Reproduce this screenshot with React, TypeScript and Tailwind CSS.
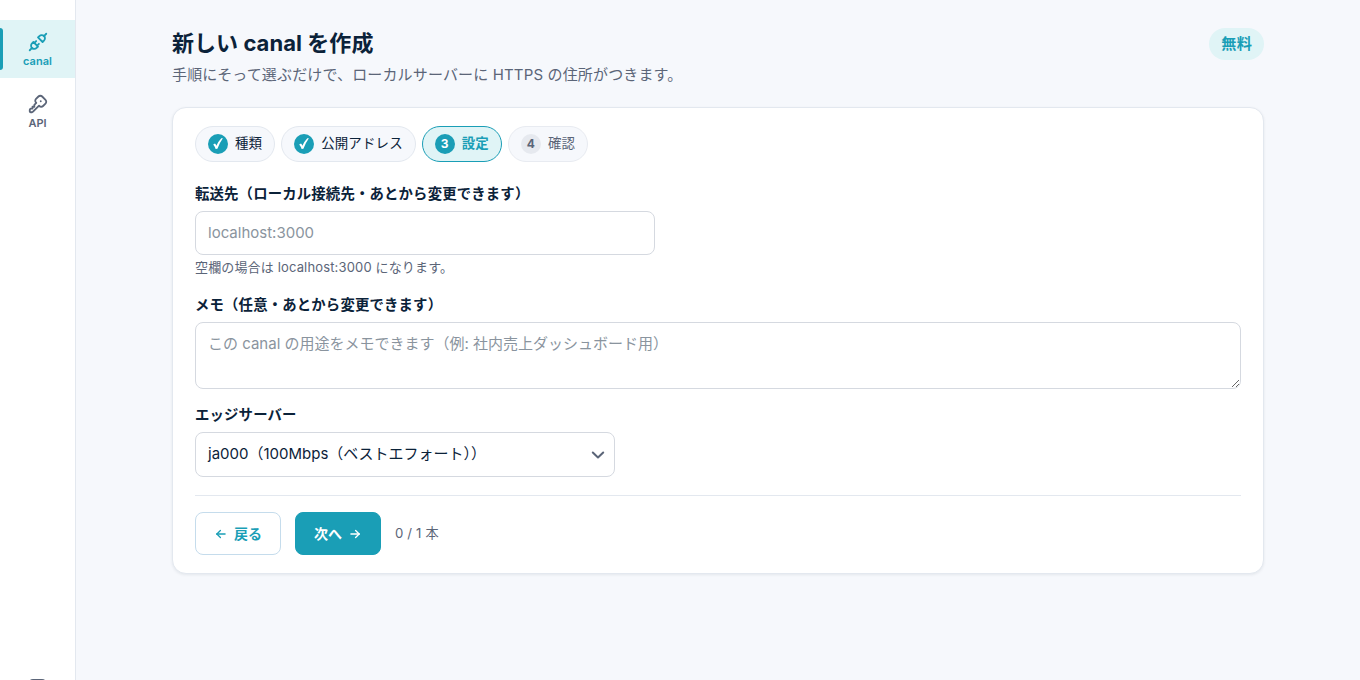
import type { ReactNode } from 'react';
import clsx from 'clsx';
import {
  TbArrowLeft,
  TbArrowRight,
  TbKey,
  TbPlugConnected
} from 'react-icons/tb';

type NavItemProps = {
  icon: ReactNode;
  label: string;
  active?: boolean;
};

function NavItem({ icon, label, active }: NavItemProps) {
  return (
    <a
      className={clsx(
        'relative flex h-[58px] flex-col items-center pt-[11px] text-[11px] font-semibold leading-[17px]',
        active ? 'bg-[#e0f4f6] text-[#1a9eb6]' : 'text-[#5b6578]'
      )}
    >
      {active && (
        <span className="absolute left-0 top-2 h-[42px] w-[3px] rounded-r-[3px] bg-[#1a9eb6]" />
      )}
      {icon}
      <span>{label}</span>
    </a>
  );
}

function CheckMark() {
  return (
    <svg className="size-5" viewBox="0 0 20 20" fill="currentColor">
      <path d="M5.2 10.6 7 9.6q.9.8 1.4 2.2Q10.300 7.300 13.300 4.200l1.600 0Q11.600 8.700 9.400 14.700l-1.800.3Q6.700 12.400 5.200 10.600Z" />
    </svg>
  );
}

type StepProps = {
  number: number;
  label: string;
  state: 'done' | 'current' | 'todo';
};

function Step({ number, label, state }: StepProps) {
  return (
    <li
      className={clsx(
        'flex h-9 items-center gap-[7px] rounded-full border px-3 text-[13.44px] leading-[22px]',
        state === 'done' && 'border-[#e3e8ef] bg-[#f6f8fc] text-[#0b2239]',
        state === 'current' &&
          'border-[#1a9eb6] bg-[#e0f4f6] font-bold text-[#1a9eb6]',
        state === 'todo' && 'border-[#e8ebf1] bg-[#f6f8fc] text-[#5b6578]'
      )}
    >
      <span
        className={clsx(
          'flex size-5 items-center justify-center rounded-full text-[12px] font-bold leading-none',
          state === 'todo'
            ? 'bg-[#e6e9ef] text-[#5b6578]'
            : 'bg-[#1a9eb6] text-white'
        )}
      >
        {state === 'done' ? <CheckMark /> : number}
      </span>
      <span className="-mt-0.5">{label}</span>
    </li>
  );
}

const steps: StepProps[] = [
  { number: 1, label: '種類', state: 'done' },
  { number: 2, label: '公開アドレス', state: 'done' },
  { number: 3, label: '設定', state: 'current' },
  { number: 4, label: '確認', state: 'todo' }
];

export default function App() {
  return (
    <div
      lang="ja"
      className="flex h-screen overflow-hidden bg-[#f6f8fc] font-['Inter','Noto_Sans_CJK_JP',sans-serif] text-[15px] tracking-[0.15px] text-[#0b2239]"
    >
      <aside className="flex w-[76px] shrink-0 flex-col border-r border-[#e3e8ef] bg-white pt-5 tracking-normal">
        <NavItem icon={<TbPlugConnected size={22} />} label="canal" active />
        <div className="mt-1">
          <NavItem icon={<TbKey size={22} />} label="API" />
        </div>
        <div className="mt-auto flex h-1 shrink-0 justify-center pt-[3px]">
          <span className="h-3 w-[17px] shrink-0 rounded-sm border-2 border-[#5b6578]" />
        </div>
      </aside>

      <main className="flex-1 px-24 pt-7">
        <header className="flex items-start justify-between">
          <div>
            <h1 className="text-[22px] font-bold leading-[30px] tracking-[0.05px]">
              新しい canal を作成
            </h1>
            <p className="mt-[5px] leading-6 text-[#5b6578]">
              手順にそって選ぶだけで、ローカルサーバーに HTTPS の住所がつきます。
            </p>
          </div>
          <span className="flex h-8 items-center rounded-full bg-[#e0f4f6] px-3 text-[15.2px] font-bold text-[#1a9eb6]">
            無料
          </span>
        </header>

        <section className="mt-5 rounded-[14px] border border-[#e3e8ef] bg-white px-[22px] py-[18px] shadow-[0_1px_3px_rgba(11,34,57,0.08)]">
          <ol className="flex gap-1.5">
            {steps.map((step) => (
              <Step key={step.number} {...step} />
            ))}
          </ol>

          <div className="mt-5">
            <label className="block text-[14.4px] font-bold leading-[23px]">
              転送先（ローカル接続先・あとから変更できます）
            </label>
            <input
              type="text"
              placeholder="localhost:3000"
              className="mt-1.5 block h-11 w-[460px] rounded-lg border border-[#d5d9e0] bg-white px-3 pb-0.5 text-[15px] tracking-normal placeholder:text-[#8a949e]"
            />
            <p className="mt-[2px] text-[13px] leading-[21px] text-[#5b6578]">
              空欄の場合は localhost:3000 になります。
            </p>
          </div>

          <div className="mt-[15px]">
            <label className="block text-[14.4px] font-bold leading-[23px]">
              メモ（任意・あとから変更できます）
            </label>
            <textarea
              placeholder="この canal の用途をメモできます（例: 社内売上ダッシュボード用）"
              className="mt-1.5 block h-[67px] w-full resize-y rounded-lg border border-[#d5d9e0] bg-white px-3 py-[10px] text-[15px] leading-[22px] tracking-normal placeholder:text-[#8a949e]"
            />
          </div>

          <div className="mt-[14px]">
            <label className="block text-[14.4px] font-bold leading-[23px]">
              エッジサーバー
            </label>
            <button
              type="button"
              className="mt-1.5 flex h-[45px] w-[420px] items-center justify-between rounded-lg border border-[#d5d9e0] bg-white pl-3 pr-[9px] text-[15px] tracking-normal"
            >
              <span>ja000（100Mbps（ベストエフォート））</span>
              <svg
                className="size-[14px] text-[#5b6578]"
                viewBox="0 0 14 14"
                fill="none"
                stroke="currentColor"
                strokeWidth="2"
                strokeLinecap="round"
                strokeLinejoin="round"
              >
                <path d="M1.8 4.5 7 9.5l5.2-5" />
              </svg>
            </button>
          </div>

          <div className="mt-[18px] flex items-center gap-[14px] border-t border-[#e3e8ef] pt-4">
            <button
              type="button"
              className="flex h-[43px] items-center gap-1.5 rounded-lg border border-[#c5dcec] bg-white px-[18px] text-[14px] font-bold tracking-normal text-[#1a9eb6]"
            >
              <TbArrowLeft size={14} strokeWidth={2.2} />
              戻る
            </button>
            <button
              type="button"
              className="flex h-[43px] items-center gap-1.5 rounded-lg border border-[#1a9eb6] bg-[#1a9eb6] px-[18px] text-[14px] font-bold tracking-normal text-white"
            >
              次へ
              <TbArrowRight size={14} strokeWidth={2.2} />
            </button>
            <span className="text-[13.2px] text-[#5b6578]">0 / 1 本</span>
          </div>
        </section>
      </main>
    </div>
  );
}
